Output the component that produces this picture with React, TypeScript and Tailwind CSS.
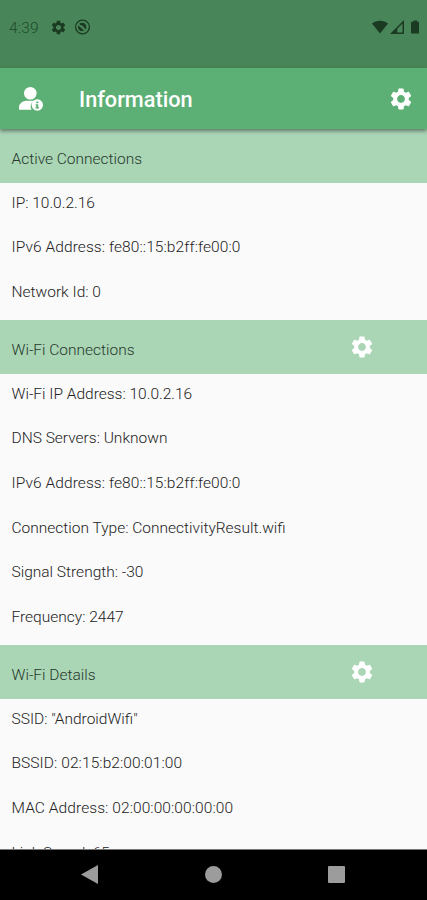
import React from 'react';
import clsx from 'clsx';
import { MdSettings } from 'react-icons/md';

const sections = [
  {
    title: 'Active Connections',
    settings: false,
    rows: ['IP: 10.0.2.16', 'IPv6 Address: fe80::15:b2ff:fe00:0', 'Network Id: 0']
  },
  {
    title: 'Wi-Fi Connections',
    settings: true,
    rows: [
      'Wi-Fi IP Address: 10.0.2.16',
      'DNS Servers: Unknown',
      'IPv6 Address: fe80::15:b2ff:fe00:0',
      'Connection Type: ConnectivityResult.wifi',
      'Signal Strength: -30',
      'Frequency: 2447'
    ]
  },
  {
    title: 'Wi-Fi Details',
    settings: true,
    rows: [
      'SSID: "AndroidWifi"',
      'BSSID: 02:15:b2:00:01:00',
      'MAC Address: 02:00:00:00:00:00',
      'Link Speed: 65'
    ]
  }
];

function StatusBar() {
  return <div className="flex h-[68px] shrink-0 items-start bg-[#488558] pt-[18px] pr-[8px] pl-[9px] text-[#1b3a22]">
      <span className="w-[30px] text-[15.5px] leading-[20px] font-light tracking-[0.2px] whitespace-nowrap text-[#1f4a2b]">4:39</span>
      <MdSettings className="mt-[1px] ml-[11px] size-[17px]" />
      <svg className="mt-[1px] ml-[7px] size-[17px]" viewBox="0 0 17 17" fill="none">
        <circle cx="8.5" cy="8" r="6.9" stroke="currentColor" strokeWidth="1.3" />
        <path d="M5 4.9c2.2-1.8 5.4-1.3 6.7.8.8 1.4.8 3.3.1 4.6z" fill="currentColor" />
        <path d="M4.4 6.3c-.8 2-.3 4.2 1.4 5.2 1.4.8 3 .7 4.2 0z" fill="currentColor" />
        <path d="M4.5 5.3l7.5 6.2" stroke="#488558" strokeWidth="1.1" />
        <path d="M7.4 6.5l2.6 2" stroke="#488558" strokeWidth="1" />
      </svg>
      <div className="ml-auto flex pt-[2px]">
        <svg className="h-[14px] w-[16px]" viewBox="0 0 16 14" fill="currentColor">
          <path d="M0 3.5C4.5-.3 11.5-.3 16 3.500L8 13.500z" />
        </svg>
        <svg className="ml-[2px] h-[14px] w-[14px]" viewBox="0 0 14 14">
          <path d="M0 14L14 0v14z" fill="currentColor" />
          <path d="M7.3 8.7l5.2-5.300v9.100H7.300z" fill="#488558" />
        </svg>
        <svg className="ml-[7px] h-[14px] w-[8.5px]" viewBox="0 0 9 14" fill="currentColor">
          <path d="M2.500 0h4v1.500H8q1 0 1 1V13q0 1-1 1H1q-1 0-1-1V2.500q0-1 1-1h1.500z" />
        </svg>
      </div>
    </div>;
}

function AppBar() {
  return <header className="relative z-10 flex h-[61px] shrink-0 items-center bg-[#5db075] pr-[13px] pl-[19px] text-white shadow-[0_2px_4px_rgba(0,0,0,0.45)]">
      <svg className="h-[24px] w-[25px]" viewBox="0 0 25 24" fill="currentColor">
        <circle cx="11.3" cy="6.3" r="6.3" />
        <path d="M0 22.7v-2.500c0-3.500 3.500-6.500 7.500-6.500h8c-2.800 1.400-4.200 4-3.800 6.500 0 .9.400 1.800 1 2.500z" />
        <circle cx="18.300" cy="18" r="5.700" />
        <path d="M17.300 14.600h2v1.600h-2zM16.600 17.300h2.600v3h.8v1.200h-3.600v-1.200h.8v-1.800h-.6z" fill="#5db075" />
      </svg>
      <h1 className="ml-[35px] pt-[3px] text-[21.7px] leading-none font-medium">Information</h1>
      <MdSettings className="ml-auto size-[26px]" />
    </header>;
}

function Section({ title, settings, rows }: (typeof sections)[number]) {
  return <section className="pb-[3.4px]">
      <div className="flex h-[54px] items-center justify-between bg-[#aad6b6] pr-[52.5px] pl-[11.5px]">
        <h2 className="pt-[5px] text-[#26382b]">{title}</h2>
        {settings && <MdSettings className="size-[26px] text-white" />}
      </div>
      {rows.map(row => <p key={row} className={clsx('flex h-[44.6px] items-center pb-[5.4px] pl-[11.5px] whitespace-nowrap', row.includes(':0') && 'tracking-[0.08px]')}>
          {row}
        </p>)}
    </section>;
}

function NavBar() {
  return <nav className="flex h-[51px] shrink-0 items-center justify-between border-t border-[#777] bg-black pr-[82px] pb-[2px] pl-[81px] text-[#9c9c9c]">
      <svg className="h-[19px] w-[17px]" viewBox="0 0 17 19" fill="currentColor">
        <path d="M0 9.5L17 0v19z" />
      </svg>
      <div className="size-[17px] rounded-full bg-[#9c9c9c]" />
      <div className="size-[17px] rounded-[1px] bg-[#9c9c9c]" />
    </nav>;
}

export default function App() {
  return <div className="flex h-[900px] w-full flex-col overflow-hidden bg-[#fafafa] font-['Roboto',sans-serif]">
      <StatusBar />
      <AppBar />
      <main className="min-h-0 flex-1 overflow-hidden text-[15.5px] leading-[20px] font-light text-[#222]">
        {sections.map(section => <Section key={section.title} {...section} />)}
      </main>
      <NavBar />
    </div>;
}
